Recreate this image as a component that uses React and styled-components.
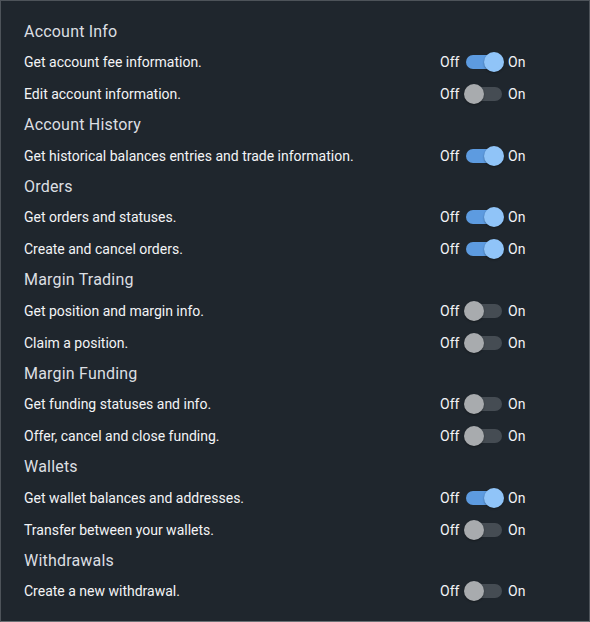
import React, { useState } from "react";
import styled, { createGlobalStyle } from "styled-components";

const Global = createGlobalStyle`
  html, body { margin: 0; padding: 0; background: #1f262d; }
  body { font-family: Roboto, "Noto Sans", "Liberation Sans", sans-serif; }
  * { box-sizing: border-box; }
`;

const Panel = styled.div`
  width: 590px;
  height: 622px;
  background: #1f262d;
  border: 1px solid #4d5359;
  border-bottom-color: #6b7075;
  padding: 15.5px 0 0 23px;
  overflow: hidden;
`;

const Heading = styled.div`
  height: 29.5px;
  line-height: 29.5px;
  font-size: 16px;
  font-weight: 400;
  letter-spacing: 0.2px;
  color: #dcdfe2;
`;

const Row = styled.div`
  display: grid;
  grid-template-columns: 1fr 149px;
  align-items: center;
  height: 32px;
`;

const Label = styled.span`
  font-size: 14px;
  font-weight: 400;
  color: #f3f4f6;
  letter-spacing: 0;
`;

const Group = styled.div`
  display: flex;
  align-items: center;
`;

const StateText = styled.span`
  display: inline-block;
  width: ${(p) => p.$w}px;
  font-size: 14px;
  font-weight: 400;
  color: #f3f4f6;
`;

const SwitchBox = styled.button`
  position: relative;
  width: 48px;
  height: 24px;
  padding: 0;
  border: none;
  background: transparent;
  cursor: pointer;
`;

const Track = styled.span`
  position: absolute;
  left: 6px;
  top: 5px;
  width: 36px;
  height: 14px;
  border-radius: 7px;
  background: ${(p) => (p.$on ? "#5d9be0" : "#454c53")};
`;

const Thumb = styled.span`
  position: absolute;
  top: 2px;
  left: ${(p) => (p.$on ? 24 : 4)}px;
  width: 20px;
  height: 20px;
  border-radius: 50%;
  background: ${(p) => (p.$on ? "#90c4f8" : "#a8abae")};
  box-shadow: 0 1px 2px rgba(0, 0, 0, 0.35);
`;

function Toggle({ initial }) {
  const [on, setOn] = useState(initial);
  return (
    <Group>
      <StateText $w={20}>Off</StateText>
      <SwitchBox onClick={() => setOn(!on)} aria-pressed={on}>
        <Track $on={on} />
        <Thumb $on={on} />
      </SwitchBox>
      <StateText $w={30}>On</StateText>
    </Group>
  );
}

const sections = [
  {
    title: "Account Info",
    rows: [
      ["Get account fee information.", true],
      ["Edit account information.", false],
    ],
  },
  {
    title: "Account History",
    rows: [["Get historical balances entries and trade information.", true]],
  },
  {
    title: "Orders",
    rows: [
      ["Get orders and statuses.", true],
      ["Create and cancel orders.", true],
    ],
  },
  {
    title: "Margin Trading",
    rows: [
      ["Get position and margin info.", false],
      ["Claim a position.", false],
    ],
  },
  {
    title: "Margin Funding",
    rows: [
      ["Get funding statuses and info.", false],
      ["Offer, cancel and close funding.", false],
    ],
  },
  {
    title: "Wallets",
    rows: [
      ["Get wallet balances and addresses.", true],
      ["Transfer between your wallets.", false],
    ],
  },
  {
    title: "Withdrawals",
    rows: [["Create a new withdrawal.", false]],
  },
];

export default function App() {
  return (
    <>
      <Global />
      <Panel>
        {sections.map((s) => (
          <section key={s.title}>
            <Heading>{s.title}</Heading>
            {s.rows.map(([label, on]) => (
              <Row key={label}>
                <Label>{label}</Label>
                <Toggle initial={on} />
              </Row>
            ))}
          </section>
        ))}
      </Panel>
    </>
  );
}
